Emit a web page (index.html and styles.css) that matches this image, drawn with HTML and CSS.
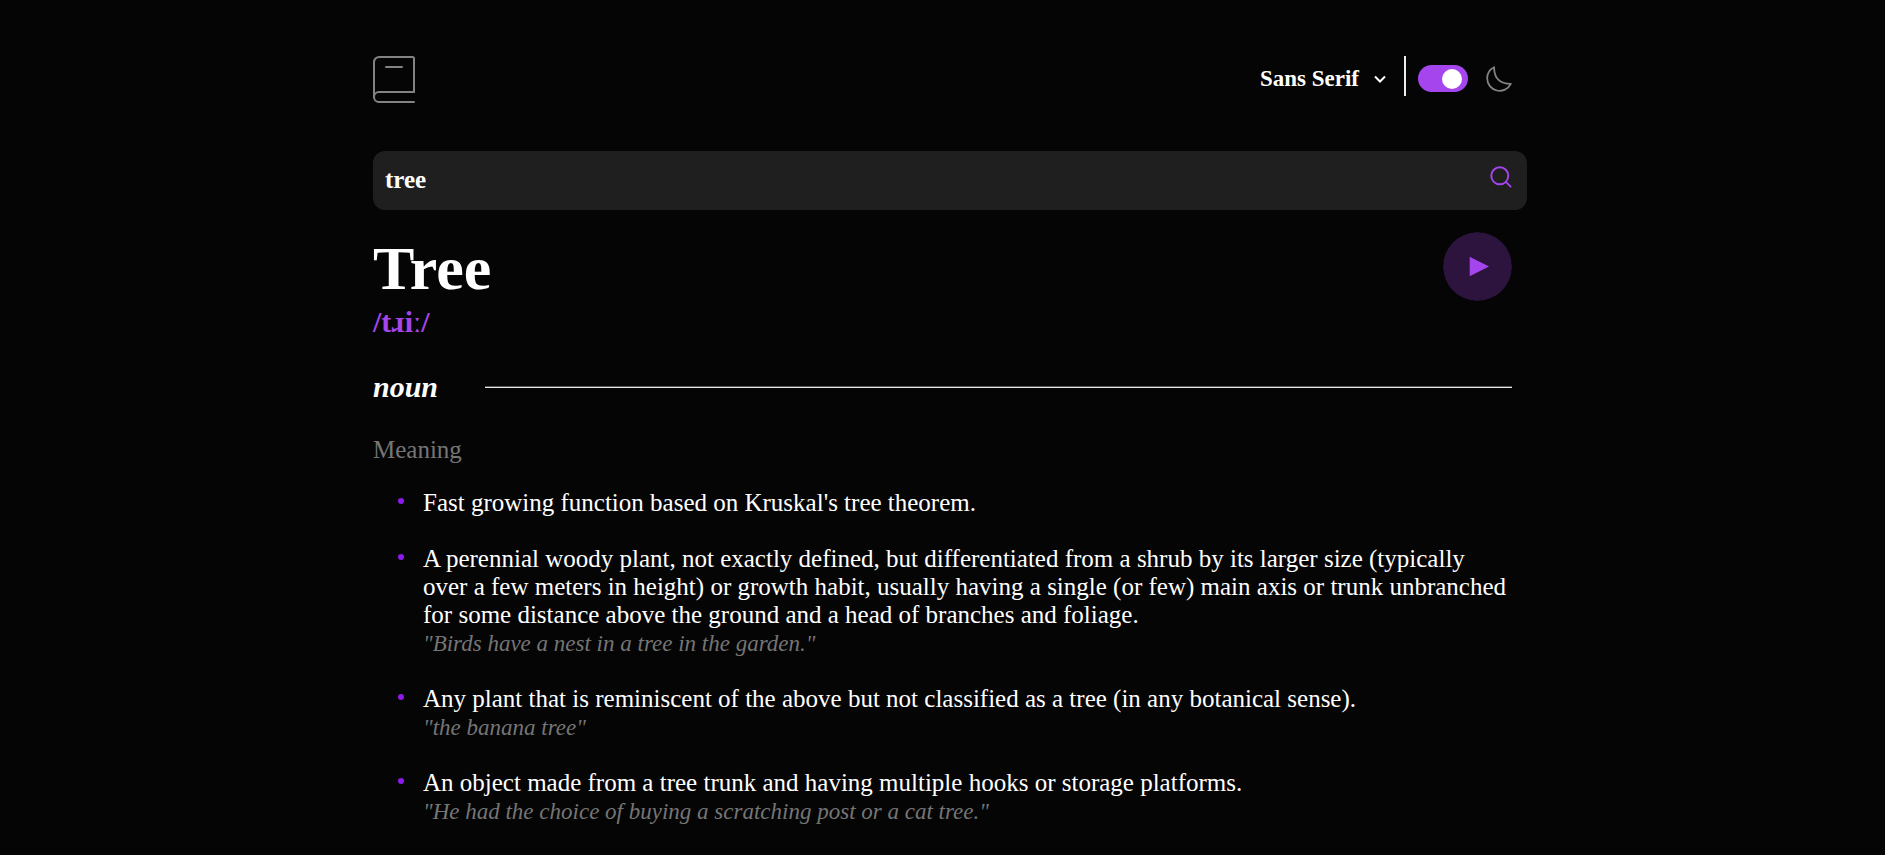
FILE: index.html
```html
<!DOCTYPE html>
<html lang="en">
<head>
<meta charset="utf-8">
<meta name="viewport" content="width=device-width, initial-scale=1">
<title>Dictionary</title>
<link rel="stylesheet" href="styles.css">
</head>
<body>
<main class="page">
  <header class="topbar">
    <svg class="logo" viewBox="0 0 42 47" role="img" aria-label="Dictionary"><g fill="none" stroke="#838383" stroke-width="2" stroke-linecap="round" stroke-linejoin="round"><path d="M41 36V2.500a1.500 1.500 0 0 0-1.500-1.500H6.200A5.200 5.200 0 0 0 1 6.200V41"/><path d="M41 46H6a5 5 0 0 1 0-10h35"/><path d="M13 11h16"/></g></svg>
    <div class="controls">
      <button class="font-picker" type="button" aria-haspopup="listbox">
        <span>Sans Serif</span>
        <svg class="chevron" viewBox="0 0 12 8" aria-hidden="true"><path d="M1 1.500l5 5 5-5" fill="none" stroke="#fff" stroke-width="2"/></svg>
      </button>
      <span class="divider"></span>
      <input class="switch" type="checkbox" role="switch" aria-label="Dark mode" checked>
      <svg class="moon" viewBox="0 0 22 22" aria-hidden="true"><path d="M1 10.449a10.544 10.544 0 0 0 19.993 4.686C11.544 15.135 6.858 10.448 6.858 1A10.545 10.545 0 0 0 1 10.449z" fill="none" stroke="#838383" stroke-width="1.500" stroke-linejoin="round"/></svg>
    </div>
  </header>
  <form class="search" role="search">
    <input class="search-input" type="text" value="tree" aria-label="Search for a word">
    <button class="search-button" type="submit" aria-label="Search"><svg class="search-icon" viewBox="0 0 18 18" aria-hidden="true"><path d="M12.663 12.663l3.887 3.887M1 7.664a6.665 6.665 0 1 0 13.330 0 6.665 6.665 0 0 0-13.330 0z" fill="none" stroke="#a445ed" stroke-width="1.500"/></svg></button>
  </form>
  <section class="word">
    <div>
      <h1 class="title">Tree</h1>
      <p class="phonetic">/tɹiː/</p>
    </div>
    <button class="play" type="button" aria-label="Play pronunciation"><svg class="play-icon" viewBox="0 0 75 75" aria-hidden="true"><circle cx="37.500" cy="37.500" r="37.500" fill="#a445ed" opacity=".25"/><path d="M29 27v21l21-10.500z" fill="#a445ed"/></svg></button>
  </section>
  <section class="meanings">
    <div class="part"><h2 class="part-name">noun</h2><hr class="rule"></div>
    <h3 class="label">Meaning</h3>
    <ul class="definitions">
      <li class="definition"><div><p class="text">Fast growing function based on Kruskal's tree theorem.</p></div></li>
      <li class="definition"><div><p class="text">A perennial woody plant, not exactly defined, but differentiated from a shrub by its larger size (typically over a few meters in height) or growth habit, usually having a single (or few) main axis or trunk unbranched for some distance above the ground and a head of branches and foliage.</p><p class="example">"Birds have a nest in a tree in the garden."</p></div></li>
      <li class="definition"><div><p class="text">Any plant that is reminiscent of the above but not classified as a tree (in any botanical sense).</p><p class="example">"the banana tree"</p></div></li>
      <li class="definition"><div><p class="text">An object made from a tree trunk and having multiple hooks or storage platforms.</p><p class="example">"He had the choice of buying a scratching post or a cat tree."</p></div></li>
    </ul>
  </section>
</main>
</body>
</html>
```
FILE: styles.css
```css
* { box-sizing: border-box; margin: 0; padding: 0; }
html { background: #050505; }
body {
  color: #fff;
  font-family: "Liberation Serif", "Times New Roman", serif;
  font-size: 25px;
  line-height: 28px;
}
button { border: 0; background: none; color: inherit; font: inherit; cursor: pointer; }
svg { display: block; }
.page { max-width: 1139px; margin: 0 auto; padding: 56px 0 24px; }
.topbar { display: flex; justify-content: space-between; align-items: flex-start; margin-bottom: 48px; }
.logo { width: 42px; height: 47px; }
.controls { display: flex; align-items: center; height: 45px; }
.font-picker { display: flex; align-items: center; gap: 15px; font-size: 23px; font-weight: 700; margin-right: 18px; }
.chevron { width: 12px; height: 8px; }
.divider { align-self: flex-start; width: 2px; height: 40px; background: #eee; margin-right: 12px; }
.switch {
  appearance: none;
  display: flex;
  align-items: center;
  justify-content: flex-end;
  width: 50px;
  height: 27px;
  padding: 0 6px;
  margin-right: 18px;
  border-radius: 14px;
  background: #a445ed;
  cursor: pointer;
}
.switch::before { content: ""; width: 20px; height: 20px; border-radius: 50%; background: #fff; }
.moon { width: 26px; height: 26px; }
.search {
  display: flex;
  align-items: center;
  height: 59px;
  margin-right: -15px;
  padding: 0 14px 0 12px;
  border-radius: 12px;
  background: #1f1f1f;
}
.search-input {
  flex: 1;
  min-width: 0;
  border: 0;
  outline: 0;
  padding-bottom: 2px;
  background: transparent;
  color: #fff;
  font: 700 25px/28px "Liberation Serif", "Times New Roman", serif;
}
.search-button { padding-bottom: 7px; }
.search-icon { width: 23px; height: 23px; }
.word { display: flex; justify-content: space-between; align-items: flex-start; padding-top: 22px; }
.title { font-size: 62px; line-height: 72px; font-weight: 700; }
.phonetic { color: #a445ed; font-size: 30px; line-height: 36px; font-weight: 700; }
.play, .play-icon { width: 69px; height: 69px; border-radius: 50%; }
.part { display: flex; align-items: center; gap: 47px; margin-top: 30px; }
.part-name { font-size: 30px; line-height: 34px; font-style: italic; font-weight: 700; }
.rule { flex: 1; border: 0; border-top: 1px solid #555; border-bottom: 1px solid #e8e8e8; }
.label { margin: 32px 0 25px; color: #757575; font-size: 25px; font-weight: 400; }
.definitions { padding-left: 25px; list-style: none; }
.definition { display: grid; grid-template-columns: 6px 1fr; column-gap: 19px; margin-bottom: 28px; }
.definition::before {
  content: "";
  width: 6px;
  height: 6px;
  margin-top: 9px;
  border-radius: 50%;
  background: #8f19e8;
}
.example { margin-bottom: -2px; color: #757575; font-size: 23px; line-height: 30px; font-style: italic; }
```
